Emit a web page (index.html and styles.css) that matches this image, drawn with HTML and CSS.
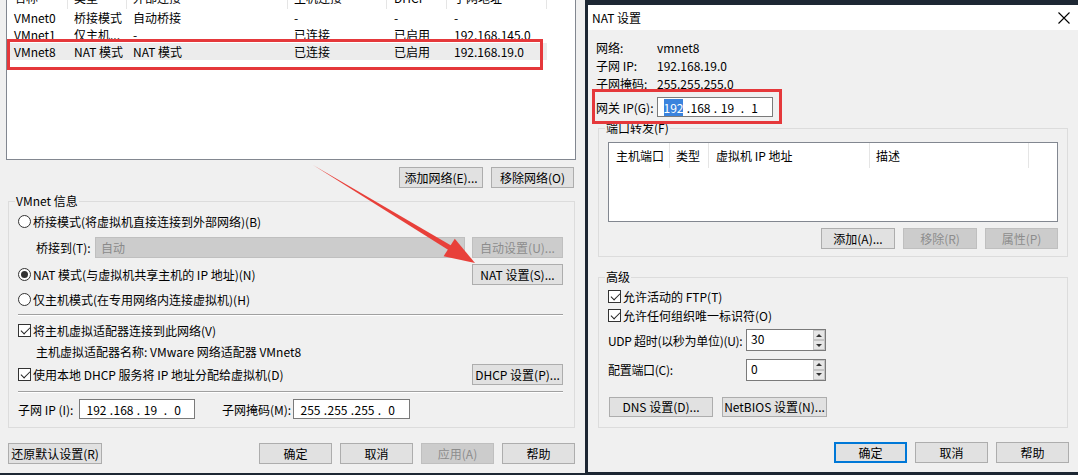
FILE: index.html
```html
<!DOCTYPE html>
<html lang="zh-CN">
<head>
    <meta charset="UTF-8">
    <title>虚拟网络编辑器 - NAT 设置</title>
    <link rel="stylesheet" href="styles.css">
</head>
<body>
<div class="screen">
    <!-- 虚拟网络编辑器 -->
    <div class="main-win">
        <div class="net-list">
            <div class="list-row list-head">
                <span class="c1">名称</span><span class="c2">类型</span><span class="c3">外部连接</span><span class="c4">主机连接</span><span class="c5">DHCP</span><span class="c6">子网地址</span>
            </div>
            <div class="list-row">
                <span class="c1">VMnet0</span><span class="c2">桥接模式</span><span class="c3">自动桥接</span><span class="c4">-</span><span class="c5">-</span><span class="c6">-</span>
            </div>
            <div class="list-row">
                <span class="c1">VMnet1</span><span class="c2">仅主机...</span><span class="c3">-</span><span class="c4">已连接</span><span class="c5">已启用</span><span class="c6">192.168.145.0</span>
            </div>
            <div class="list-row selected">
                <span class="c1">VMnet8</span><span class="c2">NAT 模式</span><span class="c3">NAT 模式</span><span class="c4">已连接</span><span class="c5">已启用</span><span class="c6">192.168.19.0</span>
            </div>
        </div>

        <div class="net-actions">
            <button class="btn w-add-net">添加网络(E)...</button>
            <button class="btn w-del-net">移除网络(O)</button>
        </div>

        <fieldset class="group vmnet-info">
            <legend>VMnet 信息</legend>
            <div class="row h26"><span class="radio"></span>桥接模式(将虚拟机直接连接到外部网络)(B)</div>
            <div class="row h26 indent">
                <span class="bridge-label">桥接到(T):</span>
                <div class="combo">自动</div>
                <button class="btn w-side" disabled>自动设置(U)...</button>
            </div>
            <div class="row h28 spread">
                <span class="row"><span class="radio on"></span>NAT 模式(与虚拟机共享主机的 IP 地址)(N)</span>
                <button class="btn w-side">NAT 设置(S)...</button>
            </div>
            <div class="row h22"><span class="radio"></span>仅主机模式(在专用网络内连接虚拟机)(H)</div>
            <div class="sep sep-a"></div>
            <div class="row h24"><span class="check"></span>将主机虚拟适配器连接到此网络(V)</div>
            <div class="row h18 indent">主机虚拟适配器名称: VMware 网络适配器 VMnet8</div>
            <div class="row h28 spread">
                <span class="row"><span class="check"></span>使用本地 DHCP 服务将 IP 地址分配给虚拟机(D)</span>
                <button class="btn w-side">DHCP 设置(P)...</button>
            </div>
            <div class="sep sep-b"></div>
            <div class="row h26">
                <span class="subnet-label">子网 IP (I):</span>
                <div class="ip w-subnet">
                    <span class="oct">192</span><span class="dot">.</span><span class="oct">168</span><span class="dot">.</span><span class="oct">19</span><span class="dot">.</span><span class="oct">0</span>
                </div>
                <span class="mask-label">子网掩码(M):</span>
                <div class="ip w-mask">
                    <span class="oct">255</span><span class="dot">.</span><span class="oct">255</span><span class="dot">.</span><span class="oct">255</span><span class="dot">.</span><span class="oct">0</span>
                </div>
            </div>
        </fieldset>

        <div class="dialog-buttons main-buttons">
            <button class="btn w-restore">还原默认设置(R)</button>
            <span class="spacer"></span>
            <button class="btn w-std">确定</button>
            <button class="btn w-std">取消</button>
            <button class="btn w-std" disabled>应用(A)</button>
            <button class="btn w-std">帮助</button>
        </div>
    </div>

    <div class="desk-gap"></div>

    <!-- NAT 设置 对话框 -->
    <div class="nat-win">
        <div class="titlebar">
            <span>NAT 设置</span>
            <svg class="close" width="12" height="12" viewBox="0 0 12 12">
                <path d="M0.5 0.5 L11.5 11.5 M11.5 0.5 L0.5 11.5" stroke="#000" stroke-width="1.1" fill="none"/>
            </svg>
        </div>

        <div class="nat-body">
            <div class="info-row h18"><span class="k">网络:</span><span>vmnet8</span></div>
            <div class="info-row h18"><span class="k">子网 IP:</span><span>192.168.19.0</span></div>
            <div class="info-row h19"><span class="k">子网掩码:</span><span>255.255.255.0</span></div>
            <div class="info-row h28">
                <span class="k">网关 IP(G):</span>
                <div class="ip w-gateway">
                    <span class="oct"><span class="sel">192</span></span><span class="dot">.</span><span class="oct">168</span><span class="dot">.</span><span class="oct">19</span><span class="dot">.</span><span class="oct">1</span>
                </div>
            </div>
        </div>

        <fieldset class="group port-group">
            <legend>端口转发(F)</legend>
            <div class="port-list">
                <div class="port-head">
                    <span class="p1">主机端口</span><span class="p2">类型</span><span class="p3">虚拟机 IP 地址</span><span class="p4">描述</span>
                </div>
            </div>
            <div class="port-actions">
                <button class="btn w-add">添加(A)...</button>
                <button class="btn w-add" disabled>移除(R)</button>
                <button class="btn w-prop" disabled>属性(P)</button>
            </div>
        </fieldset>

        <fieldset class="group adv-group">
            <legend>高级</legend>
            <div class="row h20 first"><span class="check"></span>允许活动的 FTP(T)</div>
            <div class="row h19"><span class="check"></span>允许任何组织唯一标识符(O)</div>
            <div class="row h30">
                <span class="adv-label">UDP 超时(以秒为单位)(U):</span>
                <div class="spin"><span class="val">30</span><span class="arrows"><span class="up"></span><span class="down"></span></span></div>
            </div>
            <div class="row h29">
                <span class="adv-label">配置端口(C):</span>
                <div class="spin"><span class="val">0</span><span class="arrows"><span class="up"></span><span class="down"></span></span></div>
            </div>
            <div class="adv-actions">
                <button class="btn w-dns">DNS 设置(D)...</button>
                <button class="btn w-netbios">NetBIOS 设置(N)...</button>
            </div>
        </fieldset>

        <div class="dialog-buttons nat-buttons">
            <button class="btn w-std default">确定</button>
            <button class="btn w-std">取消</button>
            <button class="btn w-std">帮助</button>
        </div>
    </div>

    <!-- 标注 -->
    <div class="mark mark-row"></div>
    <div class="mark mark-gw"></div>
    <svg class="arrow" width="1078" height="475" viewBox="0 0 1078 475">
        <polygon points="313,165 455.8,248.2 453.2,253" fill="#e8403a"/>
        <polygon points="475,263 443.6,256.2 454.8,238.8" fill="#e8403a"/>
    </svg>
</div>
</body>
</html>
```

FILE: styles.css
```css
* {
    box-sizing: border-box;
}
html, body {
    margin: 0;
}
body {
    width: 1078px;
    height: 475px;
    overflow: hidden;
    background-color: #1d2733;
    font-family: "Noto Sans CJK SC", "Noto Sans", sans-serif;
    font-size: 12px;
    color: #000;
}
.screen {
    position: relative;
    display: flex;
    width: 1078px;
    height: 475px;
}

/* common controls */
.btn {
    font: inherit;
    height: 21px;
    padding: 0;
    line-height: 19px;
    border: 1px solid #adadad;
    background-color: #e1e1e1;
    color: #000;
    flex: none;
    white-space: nowrap;
}
.btn:disabled {
    background-color: #cccccc;
    border-color: #bfbfbf;
    color: #8c8c8c;
}
.btn.default {
    border: 2px solid #0078d7;
    line-height: 17px;
}
.group {
    margin: 0;
    min-width: 0;
    border: 1px solid #dcdcdc;
}
.group legend {
    padding: 0 1px;
    margin-left: -3px;
    line-height: 14px;
}
.row {
    display: flex;
    align-items: center;
    white-space: nowrap;
}
.spread {
    justify-content: space-between;
}
.h18 { height: 18px; }
.h19 { height: 19px; }
.h20 { height: 20px; }
.h22 { height: 22px; }
.h24 { height: 24px; }
.h26 { height: 26px; }
.h28 { height: 28px; }
.h29 { height: 29px; }
.h30 { height: 30px; }
.radio {
    width: 13px;
    height: 13px;
    margin-right: 2px;
    border: 1px solid #333;
    border-radius: 50%;
    background-color: #fff;
    display: flex;
    align-items: center;
    justify-content: center;
    flex: none;
}
.radio.on::after {
    content: "";
    width: 7px;
    height: 7px;
    border-radius: 50%;
    background-color: #333;
}
.check {
    width: 13px;
    height: 13px;
    margin-right: 2px;
    border: 1px solid #333;
    background-color: #fff;
    flex: none;
}
.check::after {
    content: "";
    display: block;
    width: 8px;
    height: 4px;
    margin: 2px 0 0 1.5px;
    border-left: 1.5px solid #222;
    border-bottom: 1.5px solid #222;
    transform: rotate(-45deg);
}
.ip {
    height: 20px;
    border: 1px solid #7a7a7a;
    background-color: #fff;
    padding-left: 6px;
    display: flex;
    align-items: center;
    flex: none;
    white-space: nowrap;
}
.ip .oct {
    width: 21px;
    text-align: center;
}
.ip .dot {
    width: 6px;
    text-align: right;
}
.sep {
    border-top: 1px solid #a0a0a0;
    border-bottom: 1px solid #fff;
}
.dialog-buttons {
    display: flex;
    gap: 8px;
}
.spacer {
    flex: 1;
}
.w-std { width: 73px; }

/* left window */
.main-win {
    width: 585px;
    height: 473px;
    background-color: #f0f0f0;
    display: flex;
    flex-direction: column;
}
.net-list {
    margin-left: 6px;
    width: 570px;
    height: 160px;
    flex: none;
    overflow: hidden;
    background-color: #fff;
    border: 1px solid #828790;
    border-top: none;
}
.list-row {
    display: flex;
    width: 540px;
    height: 17px;
    line-height: 17px;
    white-space: nowrap;
}
.list-row span {
    padding-left: 6px;
    overflow: hidden;
}
.list-head {
    height: 23px;
    line-height: 23px;
    margin-top: -14px;
}
.list-head span {
    border-right: 1px solid #e5e5e5;
}
.list-row.selected {
    background-color: #ececec;
}
.c1 { width: 61px; padding-left: 7px !important; }
.c2 { width: 59px; }
.c3 { width: 161px; }
.c4 { width: 99px; }
.c5 { width: 60px; padding-left: 7px !important; }
.c6 { width: 100px; padding-left: 7px !important; }

.net-actions {
    display: flex;
    justify-content: flex-end;
    gap: 8px;
    margin-top: 7px;
    padding-right: 11px;
}
.w-add-net { width: 84px; }
.w-del-net { width: 83px; }

.vmnet-info {
    margin: 6px 10px 0 8px;
    padding: 0 11px 5px 9px;
}
.indent {
    padding-left: 18px;
}
.bridge-label {
    width: 59px;
}
.combo {
    width: 370px;
    height: 21px;
    margin-right: 7px;
    padding-left: 5px;
    line-height: 19px;
    border: 1px solid #bfbfbf;
    background-color: #cccccc;
    color: #8a8a8a;
}
.w-side {
    width: 91px;
    margin-left: auto;
}
.sep-a {
    margin: 4px 0 2px;
}
.sep-b {
    margin: 3px 0 3px;
}
.subnet-label {
    width: 61px;
}
.w-subnet {
    width: 116px;
    margin-right: 27px;
}
.mask-label {
    width: 71px;
}
.w-mask {
    width: 117px;
}
.main-buttons {
    margin-top: 15px;
    padding: 0 10px 0 8px;
}
.w-restore { width: 94px; }

.desk-gap {
    width: 3px;
}

/* NAT dialog */
.nat-win {
    width: 490px;
    height: 467px;
    margin-top: 5px;
    background-color: #f0f0f0;
    display: flex;
    flex-direction: column;
}
.titlebar {
    height: 25px;
    background-color: #fff;
    display: flex;
    align-items: center;
    padding: 0 8px 0 4px;
    flex: none;
}
.close {
    margin-left: auto;
}
.nat-body {
    padding: 8px 0 0 8px;
}
.info-row {
    display: flex;
    align-items: center;
}
.info-row .k {
    width: 61px;
}
.w-gateway {
    width: 116px;
    padding-left: 5px;
}
.sel {
    background-color: #3a83dd;
    color: #fff;
}

.nat-win .group {
    margin: 0 10px;
    padding: 0 9px 7px 9px;
}
.port-list {
    margin-top: 7px;
    height: 80px;
    border: 1px solid #828790;
    background-color: #fff;
}
.port-head {
    display: flex;
    height: 25px;
    line-height: 25px;
}
.port-head span {
    border-right: 1px solid #e5e5e5;
    padding-left: 7px;
}
.p1 { width: 61px; }
.p2 { width: 39px; padding-left: 6px !important; }
.p3 { width: 161px; }
.p4 { width: 159px; padding-left: 6px !important; }
.port-actions {
    display: flex;
    justify-content: flex-end;
    gap: 8px;
    margin-top: 6px;
}
.w-add { width: 74px; }
.w-prop { width: 73px; }

.nat-win .adv-group {
    margin-top: 13px;
    padding: 0 9px 10px 9px;
}
.adv-group .first {
    margin-top: 2px;
}
.adv-label {
    width: 138px;
    flex: none;
    letter-spacing: -0.3px;
}
.spin {
    width: 80px;
    height: 22px;
    border: 1px solid #7a7a7a;
    background-color: #fff;
    display: flex;
    flex: none;
}
.spin .val {
    flex: 1;
    padding: 2px 0 0 4px;
    line-height: 14px;
}
.spin .arrows {
    width: 12px;
    display: flex;
    flex-direction: column;
}
.spin .arrows span {
    flex: 1;
    background-color: #e6e6e6;
    border: 1px solid #c4c4c4;
    display: flex;
    align-items: center;
    justify-content: center;
}
.spin .up::after {
    content: "";
    border-left: 3px solid transparent;
    border-right: 3px solid transparent;
    border-bottom: 3px solid #333;
}
.spin .down::after {
    content: "";
    border-left: 3px solid transparent;
    border-right: 3px solid transparent;
    border-top: 3px solid #333;
}
.adv-actions {
    display: flex;
    gap: 9px;
    margin-top: 13px;
    padding-left: 1px;
}
.w-dns { width: 104px; height: 20px; line-height: 18px; }
.w-netbios { width: 105px; height: 20px; line-height: 18px; }
.nat-buttons {
    justify-content: flex-end;
    margin-top: 14px;
    padding-right: 9px;
}

/* annotations */
.mark {
    position: absolute;
    border: 3px solid #e5383b;
    pointer-events: none;
}
.mark-row {
    left: 7px;
    top: 39px;
    width: 536px;
    height: 31px;
}
.mark-gw {
    left: 592px;
    top: 89px;
    width: 190px;
    height: 35px;
}
.arrow {
    position: absolute;
    left: 0;
    top: 0;
    pointer-events: none;
}
```
